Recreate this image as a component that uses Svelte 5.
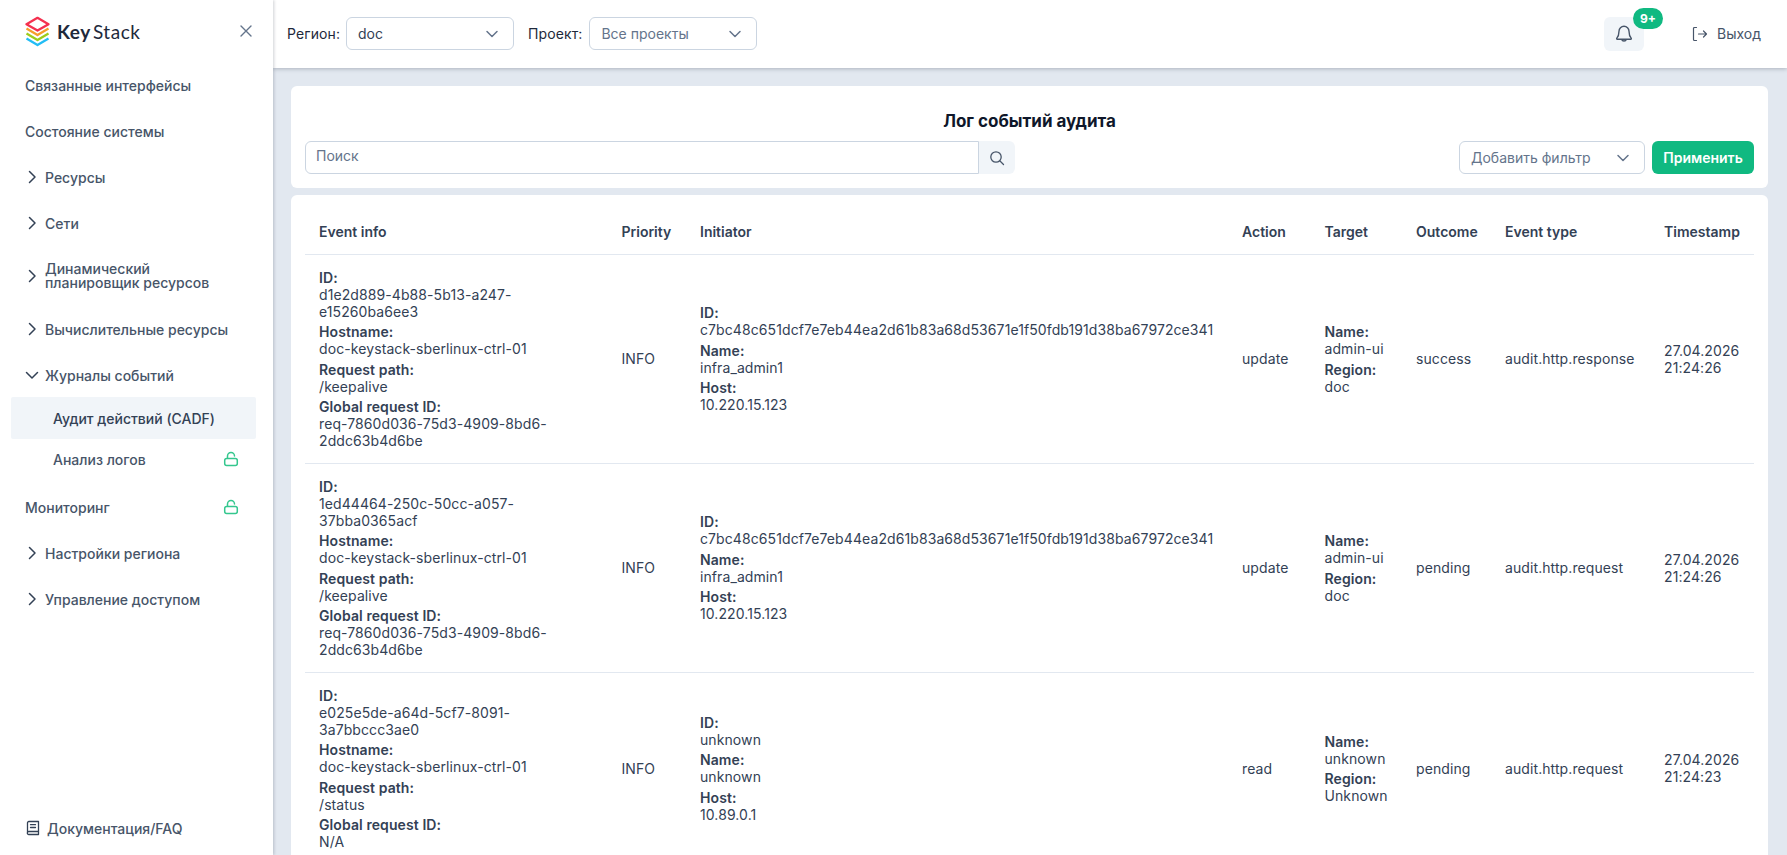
<script>
  const nav = [
    { label: "Связанные интерфейсы" },
    { label: "Состояние системы" },
    { label: "Ресурсы", arrow: "right" },
    { label: "Сети", arrow: "right" },
    { label: "Динамический планировщик ресурсов", arrow: "right", two: true },
    { label: "Вычислительные ресурсы", arrow: "right" },
    { label: "Журналы событий", arrow: "down" },
    { label: "Аудит действий (CADF)", sub: true, active: true },
    { label: "Анализ логов", sub: true, lock: true },
    { label: "Мониторинг", lock: true },
    { label: "Настройки региона", arrow: "right" },
    { label: "Управление доступом", arrow: "right" },
  ];

  const hash = "c7bc48c651dcf7e7eb44ea2d61b83a68d53671e1f50fdb191d38ba67972ce341";
  const rows = [
    {
      id: "d1e2d889-4b88-5b13-a247-e15260ba6ee3",
      path: "/keepalive",
      req: "req-7860d036-75d3-4909-8bd6-2ddc63b4d6be",
      initiator: hash, name: "infra_admin1", host: "10.220.15.123",
      action: "update", target: "admin-ui", region: "doc",
      outcome: "success", type: "audit.http.response", time: "27.04.2026 21:24:26",
    },
    {
      id: "1ed44464-250c-50cc-a057-37bba0365acf",
      path: "/keepalive",
      req: "req-7860d036-75d3-4909-8bd6-2ddc63b4d6be",
      initiator: hash, name: "infra_admin1", host: "10.220.15.123",
      action: "update", target: "admin-ui", region: "doc",
      outcome: "pending", type: "audit.http.request", time: "27.04.2026 21:24:26",
    },
    {
      id: "e025e5de-a64d-5cf7-8091-3a7bbccc3ae0",
      path: "/status",
      req: "N/A",
      initiator: "unknown", name: "unknown", host: "10.89.0.1",
      action: "read", target: "unknown", region: "Unknown",
      outcome: "pending", type: "audit.http.request", time: "27.04.2026 21:24:23",
    },
  ];
</script>

{#snippet chevron()}
  <svg class="chev" width="20" height="20" viewBox="0 0 20 20" fill="none" stroke="currentColor" stroke-width="1.5" stroke-linecap="round" stroke-linejoin="round"><path d="M5 7.5l5 5 5-5" /></svg>
{/snippet}

{#snippet lock()}
  <svg class="lock" width="16" height="16" viewBox="0 0 16 16" fill="none" stroke="#34c78e" stroke-width="1.5" stroke-linecap="round" stroke-linejoin="round"><rect x="1.700" y="7.500" width="12.600" height="7" rx="2" /><path d="M4.500 7.200V5a3.500 3.500 0 0 1 7 0" /></svg>
{/snippet}

{#snippet field(label, value)}
  <div class="field"><b>{label}:</b><span>{value}</span></div>
{/snippet}

<div class="layout">
  <aside class="sidebar">
    <div class="brand">
      <svg width="25" height="31" viewBox="0 0 25 31" fill="none" stroke-width="2.300" stroke-linejoin="round">
        <path d="M1.500 22.500L12.500 29l11-6.500" stroke="#22bdf5" />
        <path d="M1.500 17.500L12.500 24l11-6.500" stroke="#9ccc1c" />
        <path d="M1.500 12.500L12.500 19l11-6.500" stroke="#f59e2c" />
        <path d="M1.500 8.200L12.500 1.800l11 6.400-11 6.400z" stroke="#f4304f" />
      </svg>
      <span class="word"><b>Key</b>Stack</span>
      <svg class="close" width="16" height="16" viewBox="0 0 16 16" fill="none" stroke="#64748b" stroke-width="1.400" stroke-linecap="round"><path d="M3 3l10 10M13 3L3 13" /></svg>
    </div>
    <nav>
      {#each nav as item}
        <div class="item" class:sub={item.sub} class:active={item.active} class:two={item.two}>
          {#if item.arrow}
            <svg class="arrow" width="16" height="16" viewBox="0 0 16 16" fill="none" stroke="#334155" stroke-width="1.500" stroke-linecap="round" stroke-linejoin="round">
              {#if item.arrow === "right"}<path d="M5.500 2.500L11 8l-5.500 5.500" />{:else}<path d="M2.500 5.500L8 11l5.500-5.500" />{/if}
            </svg>
          {/if}
          <span class="label">{item.label}</span>
          {#if item.lock}{@render lock()}{/if}
        </div>
      {/each}
    </nav>
    <div class="docs">
      <svg width="16" height="16" viewBox="0 0 16 16" fill="none" stroke="#334155" stroke-width="1.300" stroke-linecap="round" stroke-linejoin="round"><path d="M2.500 13V2.800A1.300 1.300 0 0 1 3.800 1.500h9.700v10H3.800a1.300 1.300 0 0 0 0 3h9.700v-3M5.500 4.700h5M5.500 7.500h5" /></svg>
      <span>Документация/FAQ</span>
    </div>
  </aside>

  <div class="page">
    <header>
      <span class="sel-label">Регион:</span>
      <div class="select region"><span class="val">doc</span>{@render chevron()}</div>
      <span class="sel-label second">Проект:</span>
      <div class="select project"><span>Все проекты</span>{@render chevron()}</div>
      <div class="bell">
        <svg width="20" height="20" viewBox="0 0 20 20" fill="none" stroke="#475569" stroke-width="1.400" stroke-linecap="round" stroke-linejoin="round"><path d="M7.600 15.200a2.500 2.500 0 0 0 4.800 0M10 2.200a5 5 0 0 0-5 5c0 3.800-.7 5.300-2.300 7.200-.1.300 0 .8.500.8h13.600c.5 0 .6-.5.500-.8C15.700 12.500 15 11 15 7.200a5 5 0 0 0-5-5z" /></svg>
        <span class="badge">9+</span>
      </div>
      <div class="logout">
        <svg width="16" height="16" viewBox="0 0 16 16" fill="none" stroke="#475569" stroke-width="1.200" stroke-linecap="round" stroke-linejoin="round"><path d="M4.500 1.500H2.500a1 1 0 0 0-1 1v11a1 1 0 0 0 1 1h2M6.500 8h8M11.500 5l3 3-3 3" /></svg>
        <span>Выход</span>
      </div>
    </header>

    <main>
      <section class="card filters">
        <h1>Лог событий аудита</h1>
        <div class="filter-row">
          <div class="search">
            <div class="search-input">Поиск</div>
            <div class="search-btn">
              <svg width="16" height="16" viewBox="0 0 16 16" fill="none" stroke="#475569" stroke-width="1.300" stroke-linecap="round"><circle cx="7" cy="7" r="5.200" /><path d="M11 11l3.500 3.500" /></svg>
            </div>
          </div>
          <div class="select add"><span>Добавить фильтр</span>{@render chevron()}</div>
          <button class="apply">Применить</button>
        </div>
      </section>

      <section class="card">
        <table>
          <colgroup>
            <col style="width:302.500px" /><col style="width:78.500px" /><col style="width:542px" /><col style="width:82.500px" />
            <col style="width:91.500px" /><col style="width:89px" /><col style="width:159px" /><col style="width:104px" />
          </colgroup>
          <thead>
            <tr>
              <th>Event info</th><th>Priority</th><th>Initiator</th><th>Action</th>
              <th>Target</th><th>Outcome</th><th>Event type</th><th>Timestamp</th>
            </tr>
          </thead>
          <tbody>
            {#each rows as r}
              <tr>
                <td class="event">
                  {@render field("ID", r.id)}
                  {@render field("Hostname", "doc-keystack-sberlinux-ctrl-01")}
                  {@render field("Request path", r.path)}
                  {@render field("Global request ID", r.req)}
                </td>
                <td>INFO</td>
                <td>
                  {@render field("ID", r.initiator)}
                  {@render field("Name", r.name)}
                  {@render field("Host", r.host)}
                </td>
                <td>{r.action}</td>
                <td>
                  {@render field("Name", r.target)}
                  {@render field("Region", r.region)}
                </td>
                <td>{r.outcome}</td>
                <td>{r.type}</td>
                <td>{r.time}</td>
              </tr>
            {/each}
          </tbody>
        </table>
      </section>
    </main>
  </div>
</div>

<style>
  :global(body) {
    margin: 0;
    font-family: Inter, "Liberation Sans", sans-serif;
    font-size: 14px;
    color: #334155;
  }

  .layout {
    display: flex;
    height: 855px;
    overflow: hidden;
  }

  .sidebar {
    width: 273px;
    flex: none;
    display: flex;
    flex-direction: column;
    background: #fff;
    box-shadow: 1px 0 3px rgba(15, 23, 42, 0.2);
    position: relative;
    z-index: 2;
  }

  .brand {
    display: flex;
    align-items: center;
    height: 62px;
    padding: 0 19px 0 25px;
  }

  .word {
    font-family: Lato, sans-serif;
    font-size: 19px;
    letter-spacing: 0.55px;
    color: #1e293b;
    margin-left: 7px;
    flex: 1;
  }

  .word b {
    font-weight: 700;
    margin-right: 2px;
  }

  nav {
    flex: 1;
  }

  .item {
    display: flex;
    align-items: center;
    height: 46px;
    padding: 0 34px 0 25px;
    box-sizing: border-box;
    font-weight: 500;
    color: #475569;
  }

  .item .label {
    flex: 1;
  }

  .item.two {
    height: 60px;
    line-height: 14px;
  }

  .arrow {
    margin-right: 5px;
    margin-left: -1px;
  }

  .item.sub {
    height: 42px;
    margin: 0 17px 0 11px;
    padding: 0 17px 0 42px;
  }

  .item:not(.sub) + .sub {
    margin-top: -1px;
  }

  .sub + .sub {
    margin-top: -1px;
  }

  .sub + .item:not(.sub) {
    margin-top: 4px;
  }

  .item.active {
    background: #f1f5f9;
    color: #334155;
    border-radius: 2px;
  }

  .docs {
    display: flex;
    align-items: center;
    gap: 6px;
    padding: 0 25px;
    height: 44px;
    margin-bottom: 5px;
    font-weight: 500;
    color: #475569;
  }

  .page {
    flex: 1;
    min-width: 0;
    display: flex;
    flex-direction: column;
    background: #e2e8f0;
  }

  header {
    height: 68px;
    flex: none;
    box-sizing: border-box;
    display: flex;
    align-items: center;
    padding: 0 26px 1px 14px;
    background: #fff;
    box-shadow: 0 1px 4px rgba(15, 23, 42, 0.25);
    position: relative;
    z-index: 1;
    color: #1e293b;
  }

  .sel-label {
    margin-right: 6px;
    letter-spacing: 0.1px;
  }

  .sel-label.second {
    margin-left: 14px;
    margin-right: 7px;
  }

  .select {
    display: flex;
    align-items: center;
    justify-content: space-between;
    height: 33px;
    box-sizing: border-box;
    border: 1px solid #cbd5e1;
    border-radius: 6px;
    padding: 0 11px;
    color: #64748b;
    background: #fff;
  }

  .select .val {
    color: #334155;
  }

  .chev {
    color: #64748b;
    flex: none;
  }

  .region,
  .project {
    width: 168px;
  }

  .bell {
    margin-left: auto;
    width: 40px;
    height: 34px;
    border-radius: 6px;
    background: #f1f5f9;
    display: flex;
    align-items: center;
    justify-content: center;
    position: relative;
  }

  .badge {
    position: absolute;
    left: 29px;
    top: -9px;
    width: 30px;
    height: 21px;
    border-radius: 11px;
    background: #10b981;
    color: #fff;
    font-size: 12px;
    font-weight: 700;
    display: flex;
    align-items: center;
    justify-content: center;
  }

  .logout {
    display: flex;
    align-items: center;
    gap: 9px;
    margin-left: 48px;
    color: #475569;
  }

  main {
    flex: 1;
    min-height: 0;
    overflow: hidden;
    padding: 18px 19px 0 18px;
    display: flex;
    flex-direction: column;
    gap: 7px;
  }

  .card {
    background: #fff;
    border-radius: 6px;
    padding: 14px;
    flex: none;
  }

  .filters {
    height: 102px;
    box-sizing: border-box;
    padding-top: 23px;
  }

  h1 {
    margin: 0 0 8px;
    text-align: center;
    font-size: 17px;
    line-height: 24px;
    font-weight: 700;
    color: #0f172a;
  }

  .filter-row {
    display: flex;
    align-items: center;
    gap: 7px;
  }

  .search {
    display: flex;
    width: 710px;
    margin-right: auto;
  }

  .search-input {
    flex: 1;
    height: 33px;
    box-sizing: border-box;
    border: 1px solid #cbd5e1;
    border-radius: 6px 0 0 6px;
    padding: 0 10px;
    line-height: 27px;
    color: #64748b;
  }

  .search-btn {
    width: 36px;
    height: 33px;
    background: #f1f5f9;
    border-radius: 0 6px 6px 0;
    display: flex;
    align-items: center;
    justify-content: center;
  }

  .add {
    width: 186px;
  }

  .apply {
    width: 102px;
    height: 33px;
    border: none;
    border-radius: 6px;
    background: #10b981;
    color: #fff;
    font: 600 14px Inter, sans-serif;
  }

  table {
    width: 1449px;
    table-layout: fixed;
    border-collapse: collapse;
    line-height: 17px;
    letter-spacing: 0.09px;
  }

  th {
    text-align: left;
    font-weight: 600;
    padding: 0 0 0 14px;
    height: 45px;
    letter-spacing: 0;
    border-bottom: 1px solid #e2e8f0;
  }

  td {
    padding: 13.500px 0 14px 14px;
    border-bottom: 1px solid #e2e8f0;
    vertical-align: middle;
    overflow-wrap: break-word;
  }

  td.event {
    padding-right: 30px;
  }

  .field + .field {
    margin-top: 3.500px;
  }

  .field b {
    display: block;
    font-weight: 600;
  }

  .field span {
    display: block;
  }
</style>
